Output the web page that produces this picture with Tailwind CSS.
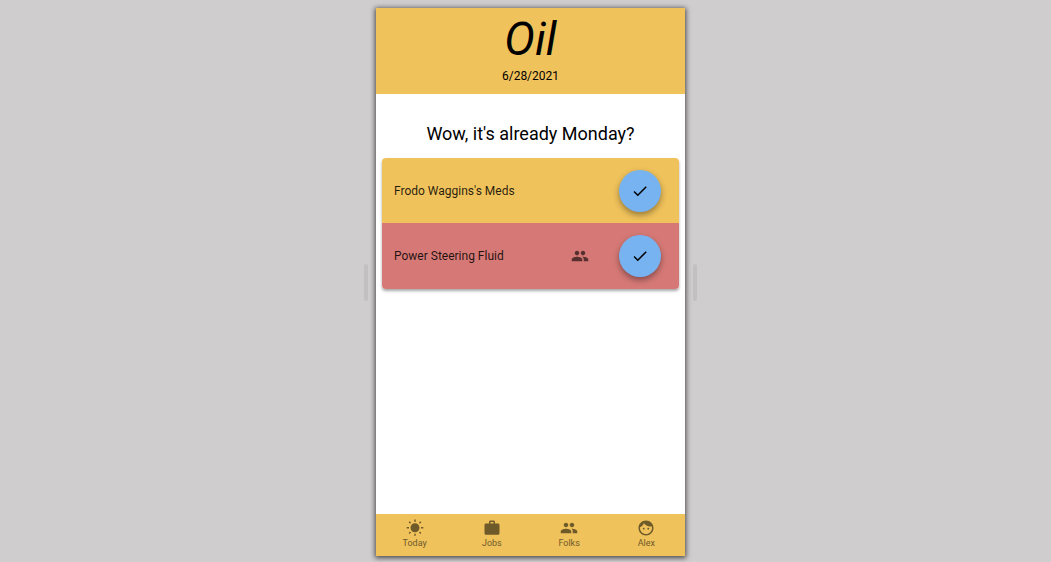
<!DOCTYPE html>
<html lang="en">
<head>
<meta charset="utf-8">
<meta name="viewport" content="width=device-width, initial-scale=1">
<title>Oil</title>
<script src="https://cdn.jsdelivr.net/npm/@tailwindcss/browser@4"></script>
</head>
<body class="flex h-screen items-center justify-center gap-2 bg-[#d0cdce] pt-2 pr-0 pb-[6px] pl-[10px] font-['Roboto',sans-serif] text-black">
<svg class="hidden" aria-hidden="true">
  <symbol id="check" viewBox="0 0 24 24"><path d="M9 16.17L4.83 12l-1.42 1.41L9 19 21 7l-1.41-1.41z"/></symbol>
  <symbol id="people" viewBox="0 0 24 24"><path d="M16 11c1.66 0 2.99-1.34 2.99-3S17.66 5 16 5c-1.66 0-3 1.34-3 3s1.34 3 3 3zm-8 0c1.66 0 2.99-1.34 2.99-3S9.66 5 8 5C6.34 5 5 6.34 5 8s1.34 3 3 3zm0 2c-2.33 0-7 1.17-7 3.5V19h14v-2.5c0-2.33-4.67-3.5-7-3.5zm8 0c-.29 0-.62.02-.97.05 1.16.84 1.97 1.97 1.97 3.45V19h6v-2.5c0-2.33-4.67-3.5-7-3.5z"/></symbol>
</svg>
<div class="h-[37px] w-1 rounded-full bg-[#c3c0c1]"></div>
<div class="flex h-full w-full max-w-[309px] flex-col bg-white shadow-[0_1px_5px_1px_rgba(0,0,0,0.65)]">
  <header class="flex h-[86px] shrink-0 flex-col items-center bg-[#f0c25b] pt-1">
    <h1 class="text-[46px] leading-[54px] italic">Oil</h1>
    <p class="text-[12px] leading-5">6/28/2021</p>
  </header>
  <main class="flex grow flex-col px-[6px] pt-7">
    <h2 class="text-center text-[18px] leading-6">Wow, it's already Monday?</h2>
    <ul class="mt-3 rounded-[4px] text-[12px] text-black/85 shadow-[0_2px_3px_rgba(0,0,0,0.35)]">
      <li class="flex h-[65px] items-center rounded-t-[4px] bg-[#f0c25b] pr-[18px] pl-3">
        <span class="grow">Frodo Waggins's Meds</span>
        <button type="button" aria-label="Complete Frodo Waggins's Meds" class="flex size-[42px] items-center justify-center rounded-full bg-[#76b3f0] text-black shadow-[0_3px_6px_rgba(0,0,0,0.38)]"><svg class="size-[18px] fill-current"><use href="#check"/></svg></button>
      </li>
      <li class="flex h-[66px] items-center rounded-b-[4px] bg-[#d67976] pr-[18px] pl-3">
        <span class="grow">Power Steering Fluid</span>
        <svg class="mr-[30px] size-[18px] fill-black/60"><use href="#people"/></svg>
        <button type="button" aria-label="Complete Power Steering Fluid" class="flex size-[42px] items-center justify-center rounded-full bg-[#76b3f0] text-black shadow-[0_3px_6px_rgba(0,0,0,0.38)]"><svg class="size-[18px] fill-current"><use href="#check"/></svg></button>
      </li>
    </ul>
  </main>
  <nav class="grid h-[42px] shrink-0 grid-cols-4 bg-[#f0c25b] text-[9px] leading-[12px] text-[#6f5a2a]">
    <a href="#today" class="flex flex-col items-center pt-[5px]">
      <svg class="size-[18px] fill-current" viewBox="0 0 24 24"><path d="M6.76 4.84l-1.8-1.79-1.41 1.41 1.79 1.79 1.42-1.41zM4 10.5H1v2h3v-2zm9-9.95h-2V3.5h2V.55zm7.45 3.91l-1.41-1.41-1.79 1.79 1.41 1.41 1.79-1.79zm-3.21 13.7l1.79 1.8 1.41-1.41-1.8-1.79-1.4 1.4zM20 10.5v2h3v-2h-3zm-8-5c-3.31 0-6 2.69-6 6s2.69 6 6 6 6-2.69 6-6-2.69-6-6-6zm-1 16.95h2V19.5h-2v2.95zm-7.45-3.91l1.41 1.41 1.79-1.8-1.41-1.41-1.79 1.8z"/></svg>
      <span>Today</span>
    </a>
    <a href="#jobs" class="flex flex-col items-center pt-[5px]">
      <svg class="size-[18px] fill-current" viewBox="0 0 24 24"><path d="M20 6h-4V4c0-1.11-.89-2-2-2h-4c-1.11 0-2 .89-2 2v2H4c-1.11 0-1.99.89-1.99 2L2 19c0 1.11.89 2 2 2h16c1.11 0 2-.89 2-2V8c0-1.11-.89-2-2-2zm-6 0h-4V4h4v2z"/></svg>
      <span>Jobs</span>
    </a>
    <a href="#folks" class="flex flex-col items-center pt-[5px]">
      <svg class="size-[18px] fill-current"><use href="#people"/></svg>
      <span>Folks</span>
    </a>
    <a href="#alex" class="flex flex-col items-center pt-[5px]">
      <svg class="size-[18px] fill-current" viewBox="0 0 24 24"><path d="M9 11.75c-.69 0-1.25.56-1.25 1.25s.56 1.25 1.25 1.25 1.25-.56 1.25-1.25-.56-1.25-1.25-1.25zm6 0c-.69 0-1.25.56-1.25 1.25s.56 1.25 1.25 1.25 1.25-.56 1.25-1.25-.56-1.25-1.25-1.25zM12 2C6.48 2 2 6.48 2 12s4.48 10 10 10 10-4.48 10-10S17.52 2 12 2zm0 18c-4.41 0-8-3.59-8-8 0-.29.02-.58.05-.86 2.36-1.05 4.23-2.98 5.21-5.37C11.07 8.33 14.05 10 17.42 10c.78 0 1.53-.09 2.25-.26.21.71.33 1.47.33 2.26 0 4.41-3.59 8-8 8z"/></svg>
      <span>Alex</span>
    </a>
  </nav>
</div>
<div class="h-[37px] w-1 rounded-full bg-[#c3c0c1]"></div>
</body>
</html>
